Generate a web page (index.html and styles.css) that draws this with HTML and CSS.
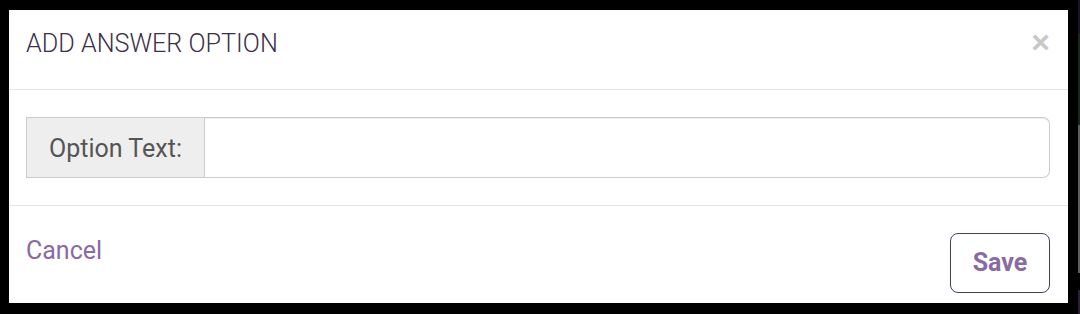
FILE: index.html
```html
<!DOCTYPE html>
<html>
<head>
<meta charset="utf-8">
<link rel="stylesheet" href="styles.css">
</head>
<body>
<div class="screen">
  <div class="modal">
    <div class="modal-header">
      <h4 class="modal-title">ADD ANSWER OPTION</h4>
      <button class="close" type="button">&times;</button>
    </div>
    <div class="modal-body">
      <div class="input-group">
        <span class="addon">Option Text:</span>
        <input class="field" type="text">
      </div>
    </div>
    <div class="modal-footer">
      <a class="cancel" href="#">Cancel</a>
      <button class="save" type="button">Save</button>
    </div>
  </div>
  <div class="edge">
    <div class="e1"></div>
    <div class="e2"></div>
    <div class="e3"></div>
    <div class="e4"></div>
    <div class="e5"></div>
  </div>
</div>
</body>
</html>
```
FILE: styles.css
```css
html, body {
  margin: 0;
  padding: 0;
  background: #000;
  font-family: Roboto, "Liberation Sans", sans-serif;
}
.screen {
  width: 1080px;
  height: 314px;
  display: flex;
  justify-content: space-between;
}
.modal {
  margin: 10px 0 0 9px;
  width: 1059px;
  height: 293px;
  background: #fff;
  display: flex;
  flex-direction: column;
}
.modal-header {
  height: 79px;
  border-bottom: 1px solid #e5e5e5;
  display: flex;
  align-items: flex-start;
  justify-content: space-between;
  padding: 0 18px 0 17px;
  box-sizing: content-box;
}
.modal-title {
  margin: 19px 0 0 0;
  font-size: 25.2px;
  line-height: 30px;
  font-weight: 300;
  color: #3b3048;
  letter-spacing: 0;
}
.close {
  margin-top: 16px;
  padding: 0;
  border: 0;
  background: none;
  font-family: "Liberation Sans", Arial, sans-serif;
  font-weight: 700;
  font-size: 32px;
  line-height: 32px;
  color: #c8c8c8;
}
.modal-body {
  height: 116px;
  border-bottom: 1px solid #e5e5e5;
  padding: 27px 18px 0 17px;
  box-sizing: border-box;
}
.input-group {
  display: flex;
  height: 61px;
}
.addon {
  width: 179px;
  box-sizing: border-box;
  background: #eeeeee;
  border: 1px solid #cccccc;
  color: #555555;
  font-size: 25px;
  display: flex;
  align-items: center;
  justify-content: center;
  padding-top: 2px;
}
.field {
  flex: 1;
  box-sizing: border-box;
  border: 1px solid #cccccc;
  border-left: 0;
  border-radius: 0 7px 7px 0;
  box-shadow: inset 0 1px 1px rgba(0,0,0,.075);
  outline: none;
  margin: 0;
}
.modal-footer {
  flex: 1;
  display: flex;
  justify-content: space-between;
  align-items: flex-start;
  padding: 0 18px 0 17px;
}
.cancel {
  margin-top: 29px;
  font-size: 25px;
  line-height: 32px;
  color: #8a6aa2;
  text-decoration: none;
}
.save {
  margin-top: 27px;
  width: 100px;
  height: 60px;
  background: #fff;
  border: 1px solid #4a3b5a;
  border-radius: 8px;
  font-family: Roboto, "Liberation Sans", sans-serif;
  font-weight: 700;
  font-size: 25px;
  color: #8a6aa2;
  padding: 0 0 2px 0;
}
.edge {
  width: 2px;
  height: 314px;
  display: flex;
  flex-direction: column;
}
.e1 { height: 33px; background: #1c1424; }
.e2 { height: 92px; background: #17291c; }
.e3 { height: 148px; background: #5e5e5e; }
.e4 { height: 17px; background: #000; }
.e5 { height: 24px; background: #2a1f35; }
```
